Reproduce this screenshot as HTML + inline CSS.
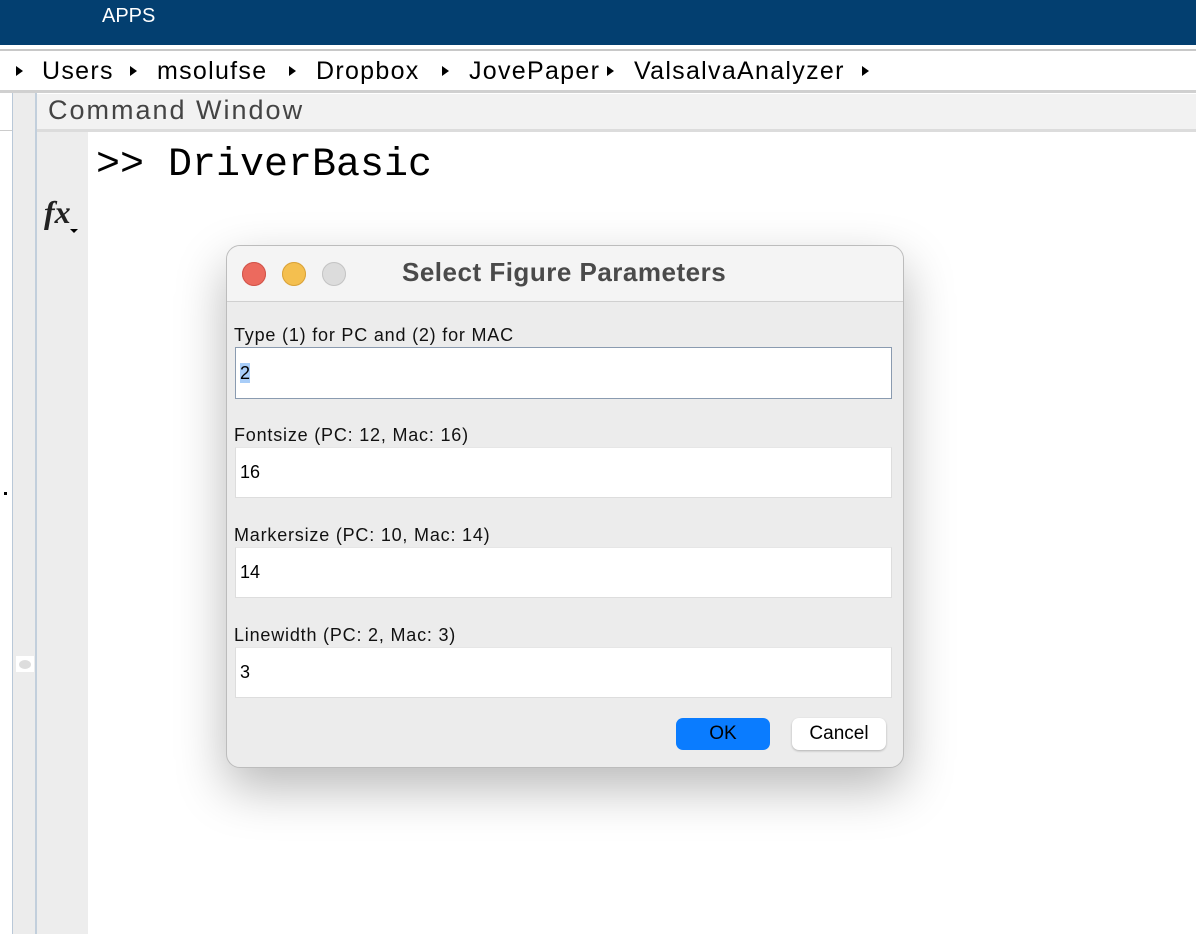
<!DOCTYPE html>
<html><head><style>
body{margin:0;width:1196px;height:934px;overflow:hidden;background:#fff;font-family:"Liberation Sans",sans-serif;position:relative}
.a{position:absolute}
.lbl{position:absolute;left:234px;font-size:18px;letter-spacing:0.8px;color:#111}
.inp{position:absolute;left:235px;width:657px;height:51px;background:#fff;border:1px solid #ddd;border-top-color:#e6e6e6;box-sizing:border-box;font-size:18px;padding:14px 0 0 4px;color:#000}
.tri{position:absolute;top:66px;width:0;height:0;border-left:7px solid #000;border-top:5px solid transparent;border-bottom:5px solid transparent}
.bc{position:absolute;top:55px;font-size:25px;letter-spacing:1.3px;color:#000;line-height:32px;white-space:nowrap}
</style></head><body>
<div class="a" style="left:0;top:0;width:1196px;height:45px;background:#033f70"></div>
<div class="a" style="left:102px;top:5px;color:#fff;font-size:20px">APPS</div>
<div class="a" style="left:0;top:45px;width:1196px;height:4px;background:#fff;border-bottom:2px solid #c8c8c8"></div>
<div class="tri" style="left:16px"></div><div class="bc" style="left:42px">Users</div>
<div class="tri" style="left:130px"></div><div class="bc" style="left:157px">msolufse</div>
<div class="tri" style="left:289px"></div><div class="bc" style="left:316px">Dropbox</div>
<div class="tri" style="left:442px"></div><div class="bc" style="left:469px">JovePaper</div>
<div class="tri" style="left:607px"></div><div class="bc" style="left:634px">ValsalvaAnalyzer</div>
<div class="tri" style="left:862px"></div>
<div class="a" style="left:0;top:90px;width:1196px;height:3px;background:#d0d0d0"></div>
<div class="a" style="left:0;top:93px;width:12px;height:841px;background:#fff;border-right:1px solid #b9c8d8"></div>
<div class="a" style="left:0;top:93px;width:12px;height:37px;border-bottom:1px solid #ccc"></div>
<div class="a" style="left:4px;top:492px;width:3px;height:3px;background:#000"></div>
<div class="a" style="left:13px;top:93px;width:22px;height:841px;background:#ececec;border-right:2px solid #c2cfdc"></div>
<div class="a" style="left:16px;top:656px;width:18px;height:16px;background:#fff"><div style="margin:4px 3px;width:12px;height:9px;border-radius:50%;background:#ddd"></div></div>
<div class="a" style="left:37px;top:94px;width:1159px;height:35px;background:#f2f2f2;border-bottom:3px solid #dcdcdc"></div>
<div class="a" style="left:48px;top:95px;font-size:27px;letter-spacing:2px;color:#444">Command Window</div>
<div class="a" style="left:37px;top:132px;width:51px;height:802px;background:#ededed"></div>
<div class="a" style="left:44px;top:194px;font-family:'Liberation Serif',serif;font-style:italic;font-weight:bold;font-size:32px;color:#222">fx</div>
<div class="a" style="left:70px;top:229px;width:0;height:0;border-left:4px solid transparent;border-right:4px solid transparent;border-top:4px solid #000"></div>
<div class="a" style="left:96px;top:143px;font-family:'Liberation Mono',monospace;font-size:40px;color:#000">&gt;&gt; DriverBasic</div>

<div class="a" style="left:226px;top:245px;width:678px;height:523px;border-radius:14px;background:#ececec;border:1px solid #bcbcbc;box-sizing:border-box;box-shadow:0 20px 50px rgba(0,0,0,.28);overflow:hidden">
<div style="height:55px;background:#f4f4f4;border-bottom:1px solid #d0d0d0"></div>
</div>
<div class="a" style="left:242px;top:262px;width:24px;height:24px;border-radius:50%;background:#ec6a5e;box-shadow:inset 0 0 0 1px #d0544a"></div>
<div class="a" style="left:282px;top:262px;width:24px;height:24px;border-radius:50%;background:#f4bf4f;box-shadow:inset 0 0 0 1px #d9a23a"></div>
<div class="a" style="left:322px;top:262px;width:24px;height:24px;border-radius:50%;background:#dcdcdc;box-shadow:inset 0 0 0 1px #c4c4c4"></div>
<div class="a" style="left:402px;top:257px;font-size:26px;letter-spacing:0.5px;font-weight:bold;color:#4a4a4a">Select Figure Parameters</div>

<div class="lbl" style="top:325px">Type (1) for PC and (2) for MAC</div>
<div class="inp" style="top:347px;height:52px;border:1px solid #8a9bb0;padding-top:15px"><span style="background:#a8cdf8">2</span></div>
<div class="lbl" style="top:425px">Fontsize (PC: 12, Mac: 16)</div>
<div class="inp" style="top:447px">16</div>
<div class="lbl" style="top:525px">Markersize (PC: 10, Mac: 14)</div>
<div class="inp" style="top:547px">14</div>
<div class="lbl" style="top:625px">Linewidth (PC: 2, Mac: 3)</div>
<div class="inp" style="top:647px">3</div>

<div class="a" style="left:676px;top:718px;width:94px;height:32px;border-radius:7px;background:#0a7cff;color:#000;font-size:19px;text-align:center;line-height:31px">OK</div>
<div class="a" style="left:792px;top:718px;width:94px;height:32px;border-radius:7px;background:#fff;box-shadow:0 1px 2px rgba(0,0,0,.25);color:#000;font-size:19px;text-align:center;line-height:31px">Cancel</div>
</body></html>
